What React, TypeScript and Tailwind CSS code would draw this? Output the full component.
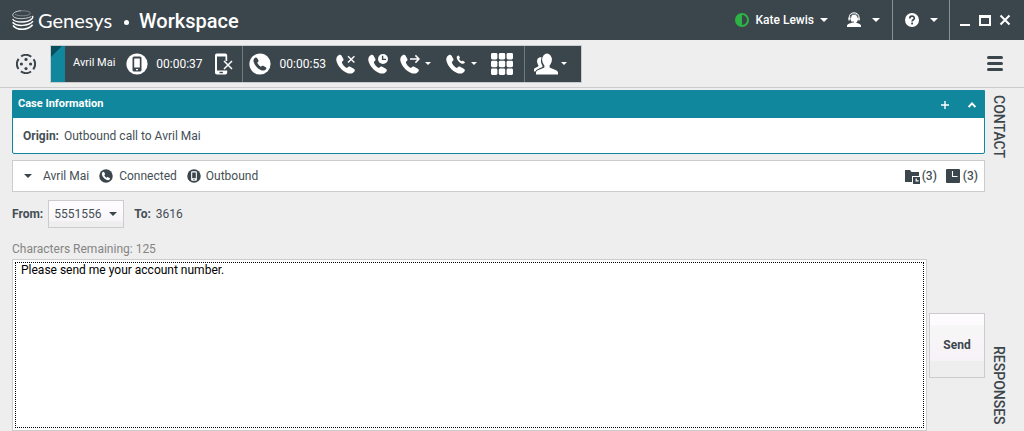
import React, { useState } from "react";

const HANDSET =
  "M8 2C12 -1 15 1 17 4L22 13C24 17 22 19 18 22C17 28 26 38 33 41C37 37 39 35 43 37L54 43C58 46 58 49 55 52C50 58 42 60 32 55C18 49 6 35 2 22C-1 12 2 6 8 2Z";

function Caret({ className = "" }: { className?: string }) {
  return (
    <svg viewBox="0 0 8 4" className={`h-1 w-2 shrink-0 fill-current ${className}`} aria-hidden="true">
      <path d="M0 0H8L4 4Z" />
    </svg>
  );
}

function SmallCaret() {
  return (
    <svg viewBox="0 0 6 3" className="h-[3px] w-1.5 shrink-0 fill-current" aria-hidden="true">
      <path d="M0 0H6L3 3Z" />
    </svg>
  );
}

function CallIcon({ children }: { children?: React.ReactNode }) {
  return (
    <svg viewBox="0 0 20 20" className="size-5 shrink-0" fill="currentColor" aria-hidden="true">
      <g transform="translate(0 .5) scale(.33)">
        <path d={HANDSET} />
      </g>
      {children}
    </svg>
  );
}

function PhoneDisc({ className, hole }: { className: string; hole: string }) {
  return (
    <svg viewBox="0 0 22 22" className={`shrink-0 ${className}`} aria-hidden="true">
      <circle cx="11" cy="11" r="10.6" fill="currentColor" />
      <g transform="translate(4.3 4.3) scale(.23)" fill={hole}>
        <path d={HANDSET} />
      </g>
    </svg>
  );
}

function MobileDisc({ className, hole }: { className: string; hole: string }) {
  return (
    <svg viewBox="0 0 22 22" className={`shrink-0 ${className}`} aria-hidden="true">
      <circle cx="11" cy="11" r="10.6" fill="currentColor" />
      <rect x="6.5" y="3.5" width="9" height="15" rx="1.6" fill={hole} />
      <rect x="8.2" y="5.5" width="5.6" height="9" fill="currentColor" />
      <rect x="10" y="16" width="2" height="1.2" fill="currentColor" />
    </svg>
  );
}

function GenesysMark() {
  return (
    <svg viewBox="0 0 22 21" className="h-[21px] w-[22px] shrink-0" fill="none" stroke="#fff" aria-hidden="true">
      <path d="M9 .8C3.6 1 .4 3.2 .8 5.4C1.6 9.2 12 9.8 19.4 6.6" strokeWidth=".9" opacity=".8" />
      <path d="M9 .8C15 .6 19 1.8 18.2 3.8C16.6 6.2 6 6.6 3 4.2" strokeWidth=".6" opacity=".55" />
      <path d="M.6 9C3 13 16 13.4 20.4 8.2C21 7.2 20.8 6.6 20.4 6" strokeWidth="1.4" />
      <path d="M.6 12.2C4 16.6 16.4 16.6 21 11.2" strokeWidth="1.5" />
      <path d="M1 15.4C5 20.6 16 20.6 20.6 14.8" strokeWidth="1.6" />
    </svg>
  );
}

function Header() {
  return (
    <header className="flex h-10 items-stretch bg-[#3b464c] text-white">
      <div className="flex items-center pl-3">
        <GenesysMark />
        <span className="ml-1 font-[Lato,sans-serif] text-xl">Genesys</span>
        <span className="ml-3 mt-1 size-[5px] rounded-full bg-white" />
        <h1 className="ml-2.5 pt-0.5 text-xl font-medium">Workspace</h1>
      </div>
      <div className="ml-auto flex items-stretch">
        <button type="button" className="flex items-center text-xs font-medium">
          <svg viewBox="0 0 14 14" className="size-3.5" aria-hidden="true">
            <circle cx="7" cy="7" r="6" fill="none" stroke="#2cb344" strokeWidth="2" />
            <path d="M7 1A6 6 0 0 0 7 13Z" fill="#2cb344" />
          </svg>
          <span className="ml-1.5">Kate Lewis</span>
          <Caret className="ml-1.5" />
        </button>
        <button type="button" aria-label="Agent menu" className="ml-[18px] mr-3 flex items-center">
          <svg viewBox="0 0 16 16" className="size-4" aria-hidden="true">
            <path d="M1 15V13.6C1.3 12 4 11.6 5.6 10.8H10.4C12 11.6 14.7 12 15 13.6V15Z" fill="#fff" />
            <ellipse cx="8.2" cy="6.4" rx="3.8" ry="5" fill="#fff" />
            <path d="M3.2 7V5.4C3.2 2.2 5.4 .8 8 .8S13 2.2 13 5.4V8" fill="none" stroke="#fff" strokeWidth="1" />
            <path d="M4.8 5.6C5 3 6.2 2.3 8 2.3S11.4 3 11.7 5.6" fill="none" stroke="#3b464c" strokeWidth=".8" />
            <path d="M4 8C4.4 9.8 6 10.4 8 10" fill="none" stroke="#3b464c" strokeWidth=".9" />
            <path d="M2.4 5.5H3.8V8.6H2.4ZM12.4 5.5H13.6V8.6H12.4Z" fill="#fff" />
          </svg>
          <Caret className="ml-2.5" />
        </button>
        <button type="button" aria-label="Help" className="flex w-[57px] items-center border-l border-[#879094] pl-3">
          <svg viewBox="0 0 14 14" className="size-3.5" aria-hidden="true">
            <circle cx="7" cy="7" r="7" fill="#fff" />
            <path d="M4.8 5.4C4.8 2.5 9.3 2.5 9.3 5.2C9.3 6.8 7.1 6.7 7.1 8.6" fill="none" stroke="#3b464c" strokeWidth="1.7" />
            <rect x="6.2" y="9.6" width="1.8" height="1.8" fill="#3b464c" />
          </svg>
          <Caret className="ml-[11px]" />
        </button>
        <div className="flex items-center gap-2 border-l border-[#879094] pl-2.5 pr-[13px]">
          <button type="button" aria-label="Minimize">
            <svg viewBox="0 0 11 12" className="h-3 w-[11px]" aria-hidden="true">
              <path d="M0 11H10" stroke="#fff" strokeWidth="2" />
            </svg>
          </button>
          <button type="button" aria-label="Maximize">
            <svg viewBox="0 0 12 12" className="size-3" aria-hidden="true">
              <path d="M0 1H12V12H0ZM2 4V10H10V4Z" fill="#fff" fillRule="evenodd" />
            </svg>
          </button>
          <button type="button" aria-label="Close">
            <svg viewBox="0 0 12 12" className="size-3" aria-hidden="true">
              <path d="M1.5 1.5L10.5 10.5M10.5 1.5L1.5 10.5" stroke="#fff" strokeWidth="2" />
            </svg>
          </button>
        </div>
      </div>
    </header>
  );
}

function Toolbar() {
  return (
    <div className="flex h-12 items-center border-b border-[#ccc] pl-4 pr-[21px] text-[#3b464c]">
      <button type="button" aria-label="Interactions">
        <svg viewBox="0 0 20 20" className="size-5" aria-hidden="true">
          <circle cx="10" cy="10" r="9" fill="none" stroke="currentColor" strokeWidth="2" strokeDasharray="10.6 3.537" strokeDashoffset="-1.77" transform="rotate(45 10 10)" />
          <g fill="currentColor">
            <circle cx="10" cy="5.4" r="1.6" />
            <circle cx="5.4" cy="10" r="1.6" />
            <circle cx="14.6" cy="10" r="1.6" />
            <circle cx="10" cy="14.6" r="1.6" />
          </g>
        </svg>
      </button>
      <div className="ml-3.5 flex h-[38px] items-stretch border border-[#ccc] bg-[#3b464c] text-xs text-white">
        <svg viewBox="0 0 14 36" className="h-9 w-3.5" aria-hidden="true">
          <path d="M0 0H14V36H0Z" fill="#10879c" />
          <path d="M0 0H11L0 11Z" fill="#074f5c" />
        </svg>
        <div className="flex items-center border-r border-[#717b7b] pl-2 pr-[9px]">
          <span className="text-[11px]">Avril Mai</span>
          <MobileDisc className="ml-[11px] size-[22px]" hole="#3b464c" />
          <span className="ml-2">00:00:37</span>
          <button type="button" aria-label="End outbound session" className="ml-3">
            <svg viewBox="0 0 18 22" className="h-[22px] w-[18px]" aria-hidden="true">
              <path
                d="M1.8 .5H10.4Q12.2 .5 12.2 2.3V8H10.5V3.5H2V17.5H12.2V19.8Q12.2 21.5 10.4 21.5H1.8Q0 21.5 0 19.8V2.3Q0 .5 1.8 .5Z"
                fill="#fff"
              />
              <rect x="4.5" y="18.8" width="3.4" height="1.4" fill="#3b464c" />
              <path d="M9 8L17 16M17 8L9 16" stroke="#fff" strokeWidth="1.5" />
            </svg>
          </button>
        </div>
        <div className="flex items-center border-r border-[#717b7b] pl-1.5 pr-[11px]">
          <PhoneDisc className="size-[22px]" hole="#3b464c" />
          <span className="ml-[9px]">00:00:53</span>
          <button type="button" aria-label="End call" className="ml-2.5">
            <CallIcon>
              <path d="M12 2.2L18.4 8.6M18.4 2.2L12 8.6" stroke="#fff" strokeWidth="1.4" />
            </CallIcon>
          </button>
          <button type="button" aria-label="Schedule callback" className="ml-3">
            <CallIcon>
              <circle cx="15" cy="5" r="5" />
              <path d="M14.6 1.8V5.4H18" fill="none" stroke="#3b464c" strokeWidth="1.4" />
            </CallIcon>
          </button>
          <button type="button" aria-label="Transfer call" className="ml-3 flex items-center gap-[5px]">
            <CallIcon>
              <path d="M10 5H19M15.4 1.4L19 5L15.4 8.6" fill="none" stroke="#fff" strokeWidth="1.5" />
            </CallIcon>
            <SmallCaret />
          </button>
          <button type="button" aria-label="Conference call" className="ml-[15px] flex items-center gap-[5px]">
            <CallIcon>
              <g transform="translate(10.6 1.4) scale(.145)">
                <path d={HANDSET} />
              </g>
            </CallIcon>
            <SmallCaret />
          </button>
          <button type="button" aria-label="Keypad" className="ml-3.5">
            <svg viewBox="0 0 22 22" className="size-[22px]" fill="#fff" aria-hidden="true">
              {[0, 7.8, 15.6].map((y) =>
                [0, 7.8, 15.6].map((x) => <rect key={`${x}-${y}`} x={x} y={y} width="6.4" height="6.4" rx="1.4" />),
              )}
            </svg>
          </button>
        </div>
        <button type="button" aria-label="Consult" className="flex items-center gap-[3px] pl-[9px] pr-3.5">
          <svg viewBox="0 0 24 22" className="h-[22px] w-6" fill="#fff" aria-hidden="true">
            <ellipse cx="13" cy="6.8" rx="4.9" ry="6.2" />
            <path d="M2 21.5V19C3 16.4 8 16 10.4 14.4V11H15.6V14.4C18 16 23 16.4 24 19V21.5Z" />
            <path d="M7.6 4.4C4 4 2.6 6.6 3.2 9.4C3.6 11 4.2 12 4.6 12.4C4.4 14 1 14.4 0 16V18.4H1.2C2.4 16 5.4 15.4 8 14.2C9 13.6 8.4 12.6 7.8 11.4C6.6 9 6.8 6.6 7.6 4.4Z" />
          </svg>
          <SmallCaret />
        </button>
      </div>
      <button type="button" aria-label="Menu" className="ml-auto flex w-4 flex-col gap-[3px]">
        <span className="h-[3px] rounded-sm bg-[#3b464c]" />
        <span className="h-[3px] rounded-sm bg-[#3b464c]" />
        <span className="h-[3px] rounded-sm bg-[#3b464c]" />
      </button>
    </div>
  );
}

function CaseInformation() {
  return (
    <section className="rounded-b-xs border border-[#10879c] bg-white">
      <div className="flex h-[27px] items-center bg-[#10879c] pl-[5px] pr-2 text-white">
        <h2 className="text-[11px] font-bold">Case Information</h2>
        <button type="button" aria-label="Add" className="ml-auto">
          <svg viewBox="0 0 8 8" className="size-2" aria-hidden="true">
            <path d="M4 0V8M0 4H8" stroke="#fff" strokeWidth="1.4" />
          </svg>
        </button>
        <button type="button" aria-label="Collapse" className="ml-[19px]">
          <svg viewBox="0 0 8 6" className="h-1.5 w-2" aria-hidden="true">
            <path d="M.6 5L4 1.4L7.4 5" fill="none" stroke="#fff" strokeWidth="2" />
          </svg>
        </button>
      </div>
      <p className="flex h-[35px] items-center gap-[5px] px-2.5">
        <span className="font-bold">Origin:</span>
        <span>Outbound call to Avril Mai</span>
      </p>
    </section>
  );
}

function StatusRow() {
  return (
    <section className="mt-1.5 flex h-8 items-center border border-[#ccc] bg-white pl-[11px] pr-1.5">
      <button type="button" aria-label="Toggle details" className="text-[#3b464c]">
        <Caret />
      </button>
      <span className="ml-[11px]">Avril Mai</span>
      <PhoneDisc className="ml-2.5 size-3.5 text-[#3b464c]" hole="#fff" />
      <span className="ml-1.5">Connected</span>
      <MobileDisc className="ml-2.5 size-3.5 text-[#3b464c]" hole="#fff" />
      <span className="ml-[5px]">Outbound</span>
      <span className="ml-auto flex items-center gap-0.5 font-medium">
        <svg viewBox="0 0 15 15" className="size-[15px]" aria-hidden="true">
          <path d="M0 1H5L6.5 3H14V7H7V13H0Z" fill="#3b464c" />
          <path d="M8 8H15V15H8Z" fill="#3b464c" />
          <path d="M11.2 9.4V11.8H13.6" fill="none" stroke="#fff" strokeWidth="1.2" />
        </svg>
        (3)
      </span>
      <span className="ml-[9px] flex items-center gap-[3px] font-medium">
        <svg viewBox="0 0 14 14" className="size-3.5" aria-hidden="true">
          <rect width="14" height="14" rx="1" fill="#3b464c" />
          <path d="M6.5 2V7.5H11.5" fill="none" stroke="#fff" strokeWidth="1.1" />
        </svg>
        (3)
      </span>
    </section>
  );
}

export default function App() {
  const [message, setMessage] = useState("Please send me your account number.");

  return (
    <div className="flex min-h-screen flex-col bg-[#eee] font-[Roboto,sans-serif] text-xs text-[#444f55]">
      <Header />
      <Toolbar />
      <div className="flex flex-1 items-stretch pl-3">
        <main className="flex min-w-0 flex-1 flex-col pt-0.5">
          <CaseInformation />
          <StatusRow />
          <div className="mt-2 flex items-center">
            <label htmlFor="from" className="font-bold">
              From:
            </label>
            <span className="relative ml-[5px]">
              <select
                id="from"
                className="h-7 w-[76px] appearance-none rounded-none border border-[#ccc] bg-linear-to-b from-[#fdfbfd] from-30% via-[#f8f5f8] via-75% to-[#eee] to-80% pl-[5px]"
              >
                <option>5551556</option>
              </select>
              <Caret className="pointer-events-none absolute right-[7px] top-3 text-[#3b464c]" />
            </span>
            <span className="ml-2.5 font-bold">To:</span>
            <span className="ml-[5px]">3616</span>
          </div>
          <label htmlFor="message" className="mt-[13px] h-[18px] leading-4 text-[#858585]">
            Characters Remaining: 125
          </label>
          <div className="flex flex-1 items-center gap-0.5">
            <textarea
              id="message"
              value={message}
              onChange={(event) => setMessage(event.target.value)}
              className="min-h-40 flex-1 resize-none self-stretch border border-[#ccc] bg-white px-2 py-0.5 leading-4 text-black outline-1 -outline-offset-4 outline-dotted outline-black"
            />
            <button
              type="button"
              className="h-[65px] w-14 border border-[#ccc] bg-[linear-gradient(#fefbff_17%,#f7f7f7_18%,#f7f2f7_74%,#eee_75%)] text-xs font-bold text-[#3b464c]"
            >
              Send
            </button>
          </div>
        </main>
        <nav aria-label="Side panels" className="flex w-[39px] flex-col items-start justify-between pb-1.5 pl-1.5 pt-[7px] text-sm font-medium text-[#3b464c]">
          <button type="button" className="leading-4 [writing-mode:vertical-rl]">
            CONTACT
          </button>
          <button type="button" className="leading-4 [writing-mode:vertical-rl]">
            RESPONSES
          </button>
        </nav>
      </div>
    </div>
  );
}
